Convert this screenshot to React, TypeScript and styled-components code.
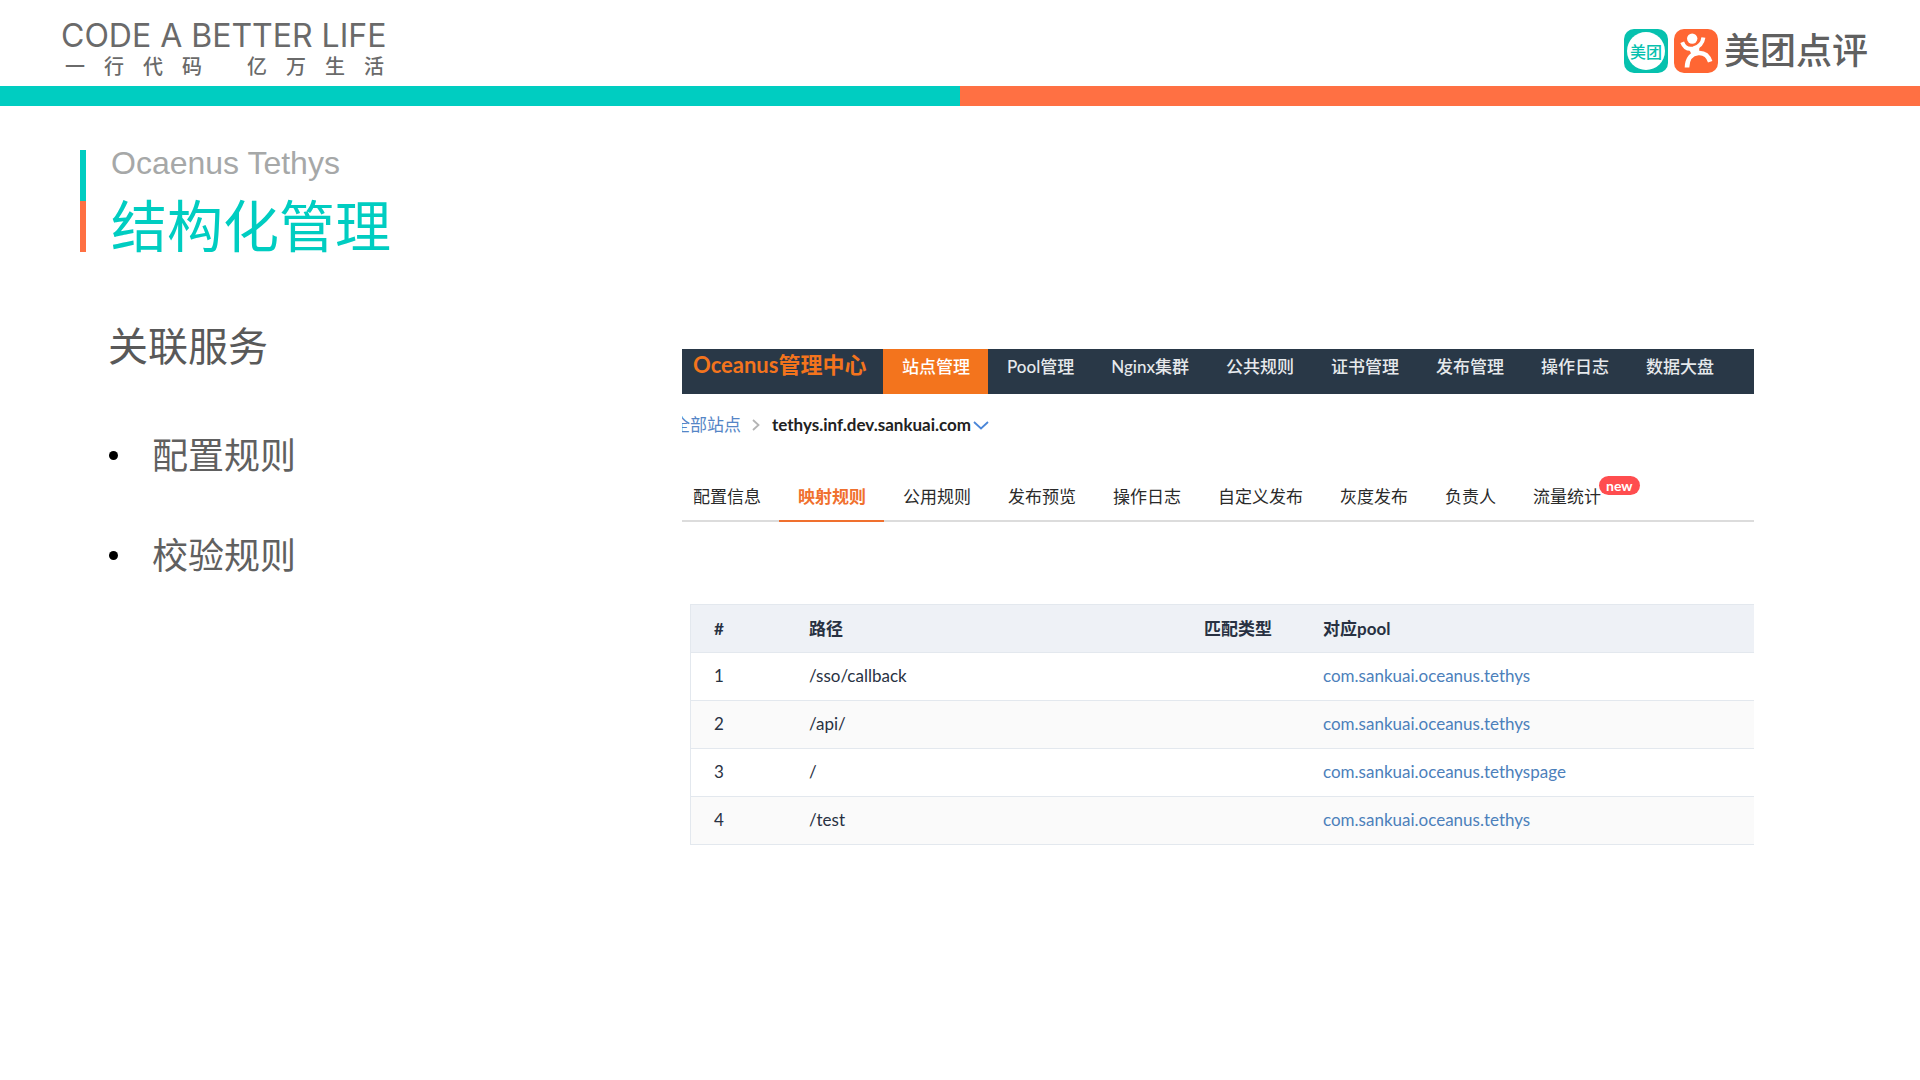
import React from "react";
import styled, { createGlobalStyle } from "styled-components";

const color = {
  teal: "#00cdc1",
  orange: "#ff7043",
  navy: "#293847",
  navOrange: "#f3741d",
  tabOrange: "#f0702e",
  link: "#4c80bb",
  ink: "#283142",
  grey: "#606060",
};

const uiFont = 'Lato, "Noto Sans CJK SC", sans-serif';
const cjkFont = '"Noto Sans CJK SC", sans-serif';

const GlobalStyle = createGlobalStyle`
  *, *::before, *::after { box-sizing: border-box; }
  body { margin: 0; background: #fff; font-family: ${cjkFont}; }
  h1, h2, p, ul { margin: 0; padding: 0; }
  ul { list-style: none; }
  a { text-decoration: none; }
`;

const Slide = styled.div`
  min-height: 100vh;
  background: #fff;
`;

const Header = styled.header`
  display: flex;
  justify-content: space-between;
  align-items: flex-start;
  height: 86px;
  padding: 0 52px 0 61px;
`;

const Slogan = styled.div`
  padding-top: 20px;
  color: #6a6a6a;
`;

const SloganEnglish = styled.p`
  font: 400 32px/32px Inter, sans-serif;
  white-space: nowrap;
`;

const SloganChinese = styled.p`
  display: flex;
  gap: 45px;
  padding: 0 4px;
  font: 500 20px/28px ${cjkFont};
`;

const Phrase = styled.span`
  display: flex;
  gap: 19px;
`;

const Brand = styled.div`
  display: flex;
  align-items: flex-start;
  gap: 6px;
  padding-top: 29px;
`;

const BrandName = styled.span`
  color: ${color.grey};
  font: 500 36px/38px ${cjkFont};
`;

const MeituanTile = styled.span`
  display: grid;
  place-items: center;
  width: 44px;
  height: 44px;
  border-radius: 10px;
  background: #06c1ae;
`;

const MeituanDisc = styled.span`
  display: grid;
  place-items: center;
  width: 38px;
  height: 38px;
  border-radius: 50%;
  background: #fff;
  color: #06c1ae;
  font: 500 16px/36px ${cjkFont};
`;

const Stripe = styled.div`
  height: 20px;
  background: linear-gradient(90deg, ${color.teal} 50%, ${color.orange} 50%);
`;

const Main = styled.main`
  display: grid;
  grid-template-columns: 602px minmax(0, 1fr);
  padding: 44px 166px 0 80px;
`;

const TitleBlock = styled.div`
  display: flex;
  gap: 25px;
  height: 102px;
`;

const TitleMark = styled.span`
  width: 6px;
  background: linear-gradient(${color.teal} 50%, ${color.orange} 50%);
`;

const Subtitle = styled.p`
  color: #a6a8a8;
  font: 400 32px/26px "Liberation Sans", sans-serif;
`;

const Title = styled.h1`
  color: ${color.teal};
  font: 400 56px/94px ${cjkFont};
`;

const Section = styled.section`
  padding: 62px 0 0 28px;
`;

const SectionTitle = styled.h2`
  color: #595959;
  font: 400 40px/60px ${cjkFont};
`;

const Points = styled.ul`
  display: grid;
  gap: 40px;
  padding-top: 49px;
`;

const Point = styled.li`
  display: flex;
  align-items: center;
  gap: 34px;
  color: ${color.grey};
  font: 400 36px/60px ${cjkFont};

  &::before {
    content: "";
    width: 9px;
    height: 9px;
    margin: 4px 0 0 1px;
    border-radius: 50%;
    background: #000;
  }
`;

const Console = styled.section`
  margin-top: 199px;
  overflow: hidden;
  color: ${color.ink};
  font: 400 17px/24px ${uiFont};
`;

const NavBar = styled.nav`
  display: flex;
  height: 45px;
  background: ${color.navy};
`;

const ConsoleName = styled.a`
  width: 201px;
  padding-left: 11px;
  color: ${color.navOrange};
  font: 700 22px/32px ${uiFont};
  white-space: nowrap;
`;

const NavLink = styled.a<{ $active?: boolean }>`
  padding: 0 18px 0 19px;
  background: ${(p) => (p.$active ? color.navOrange : "transparent")};
  color: ${(p) => (p.$active ? "#fff" : "#e6e9ec")};
  font-weight: 500;
  line-height: 36px;
  white-space: nowrap;
`;

const Breadcrumb = styled.nav`
  display: flex;
  align-items: center;
  height: 62px;
  margin-left: -9px;
`;

const CrumbLink = styled.a`
  color: #5585c6;
`;

const CrumbArrow = styled.svg`
  width: 8px;
  height: 12px;
  margin: 0 12px 0 11px;
`;

const SiteButton = styled.button`
  display: flex;
  align-items: center;
  gap: 2px;
  padding: 0;
  border: 0;
  background: none;
  color: #222;
  font: 700 17px/24px ${uiFont};
`;

const DownArrow = styled.svg`
  width: 16px;
  height: 9px;
`;

const TabBar = styled.nav`
  display: flex;
  height: 66px;
  padding-top: 17px;
  border-bottom: 2px solid #dcdcdc;
`;

const Tab = styled.a<{ $active?: boolean }>`
  position: relative;
  height: 49px;
  padding: 0 18px 0 19px;
  border-bottom: 2px solid ${(p) => (p.$active ? color.tabOrange : "transparent")};
  color: ${(p) => (p.$active ? color.tabOrange : "#2a2a2a")};
  font-weight: ${(p) => (p.$active ? 700 : 400)};
  line-height: 47px;
  white-space: nowrap;

  &:first-child {
    padding-left: 11px;
  }
`;

const NewBadge = styled.span`
  position: absolute;
  top: 3px;
  left: 85px;
  padding: 0 7px;
  border-radius: 10px;
  background: #ff4d4f;
  color: #fff;
  font: 700 14px/19px ${uiFont};
`;

const TableWrap = styled.div`
  padding: 82px 0 0 8px;
`;

const Table = styled.table`
  width: 100%;
  table-layout: fixed;
  border-collapse: separate;
  border-spacing: 0;
  border-top: 1px solid #e3e8ee;
  border-left: 1px solid #e3e8ee;
`;

const Row = styled.tr`
  &:nth-child(even) {
    background: #fafafa;
  }
`;

const HeadRow = styled.tr`
  background: #eef1f6;
`;

const HeadCell = styled.th<{ $width?: number }>`
  width: ${(p) => (p.$width ? `${p.$width}px` : "auto")};
  height: 48px;
  padding: 0 0 0 23px;
  border-bottom: 1px solid #e3e8ee;
  font-weight: 700;
  text-align: left;
`;

const Cell = styled.td`
  height: 48px;
  padding: 0 0 2px 23px;
  border-bottom: 1px solid #e3e8ee;
`;

const PoolLink = styled.a`
  color: ${color.link};
`;

const navItems = ["站点管理", "Pool管理", "Nginx集群", "公共规则", "证书管理", "发布管理", "操作日志", "数据大盘"];
const tabItems = ["配置信息", "映射规则", "公用规则", "发布预览", "操作日志", "自定义发布", "灰度发布", "负责人", "流量统计"];
const points = ["配置规则", "校验规则"];
const phrases = ["一行代码", "亿万生活"];
const rules = [
  { id: 1, path: "/sso/callback", pool: "com.sankuai.oceanus.tethys" },
  { id: 2, path: "/api/", pool: "com.sankuai.oceanus.tethys" },
  { id: 3, path: "/", pool: "com.sankuai.oceanus.tethyspage" },
  { id: 4, path: "/test", pool: "com.sankuai.oceanus.tethys" },
];

function DianpingLogo() {
  return (
    <svg width="44" height="44" viewBox="0 0 44 44" aria-hidden="true">
      <rect width="44" height="44" rx="10" fill="#ff6633" />
      <circle cx="18.2" cy="9.6" r="5.2" fill="#fff" />
      <path
        d="M8.2 13.2C10.3 18.8 14.5 20.6 19.4 19.4C24.6 18 28.6 14.4 29.4 8.4"
        fill="none"
        stroke="#fff"
        strokeWidth="4"
      />
      <path d="M13 38.5C13.2 30 17.5 24.6 24.4 24C30.6 23.6 34.4 27 36.2 32.8" fill="none" stroke="#fff" strokeWidth="4.6" />
      <path d="M14.5 19.5L25.5 16L25 24.5L18.5 27Z" fill="#fff" />
    </svg>
  );
}

export default function App() {
  return (
    <Slide>
      <GlobalStyle />
      <Header>
        <Slogan>
          <SloganEnglish>CODE A BETTER LIFE</SloganEnglish>
          <SloganChinese>
            {phrases.map((phrase) => (
              <Phrase key={phrase}>
                {[...phrase].map((ch) => (
                  <span key={ch}>{ch}</span>
                ))}
              </Phrase>
            ))}
          </SloganChinese>
        </Slogan>
        <Brand>
          <MeituanTile>
            <MeituanDisc>美团</MeituanDisc>
          </MeituanTile>
          <DianpingLogo />
          <BrandName>美团点评</BrandName>
        </Brand>
      </Header>
      <Stripe />
      <Main>
        <div>
          <TitleBlock>
            <TitleMark />
            <div>
              <Subtitle>Ocaenus Tethys</Subtitle>
              <Title>结构化管理</Title>
            </div>
          </TitleBlock>
          <Section>
            <SectionTitle>关联服务</SectionTitle>
            <Points>
              {points.map((point) => (
                <Point key={point}>{point}</Point>
              ))}
            </Points>
          </Section>
        </div>
        <Console>
          <NavBar>
            <ConsoleName href="#">Oceanus管理中心</ConsoleName>
            {navItems.map((item, i) => (
              <NavLink key={item} href="#" $active={i === 0}>
                {item}
              </NavLink>
            ))}
          </NavBar>
          <Breadcrumb>
            <CrumbLink href="#">全部站点</CrumbLink>
            <CrumbArrow viewBox="0 0 8 12" aria-hidden="true">
              <path d="M1 1L6.5 6L1 11" fill="none" stroke="#b4b4b4" strokeWidth="1.8" />
            </CrumbArrow>
            <SiteButton type="button">
              tethys.inf.dev.sankuai.com
              <DownArrow viewBox="0 0 16 9" aria-hidden="true">
                <path d="M1 1L8 7.5L15 1" fill="none" stroke="#4a86d8" strokeWidth="1.8" />
              </DownArrow>
            </SiteButton>
          </Breadcrumb>
          <TabBar>
            {tabItems.map((item, i) => (
              <Tab key={item} href="#" $active={i === 1}>
                {item}
                {item === "流量统计" && <NewBadge>new</NewBadge>}
              </Tab>
            ))}
          </TabBar>
          <TableWrap>
            <Table>
              <thead>
                <HeadRow>
                  <HeadCell $width={95}>#</HeadCell>
                  <HeadCell $width={395}>路径</HeadCell>
                  <HeadCell $width={119}>匹配类型</HeadCell>
                  <HeadCell>对应pool</HeadCell>
                </HeadRow>
              </thead>
              <tbody>
                {rules.map((rule) => (
                  <Row key={rule.id}>
                    <Cell>{rule.id}</Cell>
                    <Cell>{rule.path}</Cell>
                    <Cell />
                    <Cell>
                      <PoolLink href="#">{rule.pool}</PoolLink>
                    </Cell>
                  </Row>
                ))}
              </tbody>
            </Table>
          </TableWrap>
        </Console>
      </Main>
    </Slide>
  );
}
